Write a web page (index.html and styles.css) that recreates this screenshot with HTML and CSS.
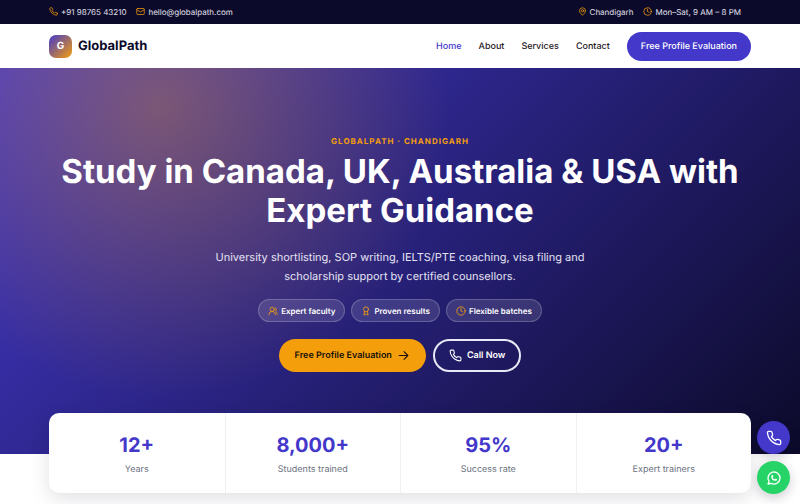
FILE: index.html
```html
<!DOCTYPE html>
<html lang="en">

<head>
    <meta charset="UTF-8" />
    <meta name="viewport" content="width=device-width, initial-scale=1.0" />
    <title>GlobalPath</title>
    <link rel="stylesheet" href="styles.css">
</head>

<body>
    <!-- icon set, shared by the whole page -->
    <svg class="sprite" aria-hidden="true">
        <symbol id="phone" viewBox="0 0 24 24">
            <path d="M22 16.92v3a2 2 0 0 1-2.18 2 19.79 19.79 0 0 1-8.63-3.07 19.5 19.5 0 0 1-6-6 19.79 19.79 0 0 1-3.07-8.67A2 2 0 0 1 4.11 2h3a2 2 0 0 1 2 1.72 12.84 12.84 0 0 0 .7 2.81 2 2 0 0 1-.45 2.11L8.09 9.91a16 16 0 0 0 6 6l1.27-1.27a2 2 0 0 1 2.11-.45 12.84 12.84 0 0 0 2.81.7A2 2 0 0 1 22 16.92z" />
        </symbol>
        <symbol id="mail" viewBox="0 0 24 24">
            <rect x="2" y="4" width="20" height="16" rx="2" />
            <path d="m22 7-8.97 5.7a1.94 1.94 0 0 1-2.06 0L2 7" />
        </symbol>
        <symbol id="pin" viewBox="0 0 24 24">
            <path d="M20 10c0 6-8 12-8 12s-8-6-8-12a8 8 0 0 1 16 0Z" />
            <circle cx="12" cy="10" r="3" />
        </symbol>
        <symbol id="clock" viewBox="0 0 24 24">
            <circle cx="12" cy="12" r="10" />
            <path d="M12 6v6l4 2" />
        </symbol>
        <symbol id="users" viewBox="0 0 24 24">
            <path d="M18 21a8 8 0 0 0-16 0" />
            <circle cx="10" cy="8" r="5" />
            <path d="M22 20c0-3.37-2-6.5-4-8a5 5 0 0 0-.45-8.3" />
        </symbol>
        <symbol id="award" viewBox="0 0 24 24">
            <circle cx="12" cy="8" r="6" />
            <path d="M8.5 13 7 22l5-3 5 3-1.5-9" />
        </symbol>
        <symbol id="arrow" viewBox="0 0 24 24">
            <path d="M4 12h16M13 5l7 7-7 7" />
        </symbol>
        <symbol id="whatsapp" viewBox="0 0 24 24">
            <path d="M3 21l1.65-3.8a9 9 0 1 1 3.4 2.9L3 21" />
            <path d="M9 10a.5.5 0 0 0 1 0V9a.5.5 0 0 0-1 0v1a5 5 0 0 0 5 5h1a.5.5 0 0 0 0-1h-1a.5.5 0 0 0 0 1" />
        </symbol>
    </svg>

    <div class="topbar">
        <div class="container topbar-inner">
            <div class="topbar-group">
                <a href="tel:+919876543210"><svg class="icon"><use href="#phone" /></svg>+91 98765 43210</a>
                <a href="mailto:hello@globalpath.com"><svg class="icon"><use href="#mail" /></svg>hello@globalpath.com</a>
            </div>
            <div class="topbar-group">
                <span><svg class="icon"><use href="#pin" /></svg>Chandigarh</span>
                <span><svg class="icon"><use href="#clock" /></svg>Mon–Sat, 9 AM – 8 PM</span>
            </div>
        </div>
    </div>

    <header class="header">
        <div class="container header-inner">
            <a class="brand" href="#"><span class="logo">G</span>GlobalPath</a>
            <nav class="nav">
                <a class="active" href="#">Home</a>
                <a href="#about">About</a>
                <a href="#services">Services</a>
                <a href="#contact">Contact</a>
                <a class="nav-cta" href="#evaluation">Free Profile Evaluation</a>
            </nav>
        </div>
    </header>

    <main>
        <section class="hero">
            <div class="container">
                <p class="eyebrow">GlobalPath · Chandigarh</p>
                <h1>Study in Canada, UK, Australia &amp; USA with Expert Guidance</h1>
                <p class="lead">University shortlisting, SOP writing, IELTS/PTE coaching, visa filing and scholarship support by certified counsellors.</p>
                <ul class="chips">
                    <li><svg class="icon"><use href="#users" /></svg>Expert faculty</li>
                    <li><svg class="icon"><use href="#award" /></svg>Proven results</li>
                    <li><svg class="icon"><use href="#clock" /></svg>Flexible batches</li>
                </ul>
                <div class="actions">
                    <a class="btn btn-accent" href="#evaluation">Free Profile Evaluation<svg class="icon"><use href="#arrow" /></svg></a>
                    <a class="btn btn-outline" href="tel:+919876543210"><svg class="icon"><use href="#phone" /></svg>Call Now</a>
                </div>
            </div>
        </section>

        <section class="container">
            <div class="stats">
                <div class="stat"><strong>12+</strong><span>Years</span></div>
                <div class="stat"><strong>8,000+</strong><span>Students trained</span></div>
                <div class="stat"><strong>95%</strong><span>Success rate</span></div>
                <div class="stat"><strong>20+</strong><span>Expert trainers</span></div>
            </div>
        </section>
    </main>

    <div class="floating">
        <a class="float-call" href="tel:+919876543210" aria-label="Call"><svg class="icon"><use href="#phone" /></svg></a>
        <a class="float-chat" href="#chat" aria-label="WhatsApp"><svg class="icon"><use href="#whatsapp" /></svg></a>
    </div>
</body>

</html>
```
FILE: styles.css
```css
:root {
    --primary: #4338ca;
    --accent: #f59e0b;
    --dark: #0c0a2a;
}

* {
    box-sizing: border-box;
}

body {
    margin: 0;
    font-family: Inter, "Liberation Sans", sans-serif;
    font-size: 9px;
    color: #1f2024;
    background-color: #fff;
    text-rendering: geometricPrecision;
}

a {
    color: inherit;
    text-decoration: none;
}

.sprite {
    position: absolute;
    width: 0;
    height: 0;
}

.icon {
    width: 10px;
    height: 10px;
    flex-shrink: 0;
    fill: none;
    stroke: currentColor;
    stroke-width: 2;
    stroke-linecap: round;
    stroke-linejoin: round;
}

.container {
    max-width: 1200px;
    margin: 0 auto;
    padding: 0 49px;
}

/* top bar */
.topbar {
    padding-bottom: 1px;
    background-color: var(--dark);
    color: #e2e1ee;
    font-size: 8px;
}

.topbar-inner,
.topbar-group,
.topbar-group a,
.topbar-group span {
    display: flex;
    align-items: center;
}

.topbar-inner {
    justify-content: space-between;
    height: 23px;
}

.topbar-group a,
.topbar-group span {
    gap: 3px;
    margin-right: 10px;
}

.topbar .icon {
    width: 9px;
    height: 9px;
    color: var(--accent);
}

/* header */
.header {
    background-color: #fff;
}

.header-inner {
    display: flex;
    align-items: center;
    justify-content: space-between;
    height: 44px;
}

.brand {
    display: flex;
    align-items: center;
    gap: 6px;
    font-size: 13px;
    font-weight: 700;
    color: var(--dark);
}

.logo {
    display: grid;
    place-items: center;
    width: 23px;
    height: 23px;
    border-radius: 7px;
    background: linear-gradient(135deg, var(--primary), var(--accent));
    color: #fff;
    font-size: 10px;
}

.nav {
    display: flex;
    align-items: center;
    gap: 17px;
    font-weight: 500;
}

.nav .active {
    color: var(--primary);
}

.nav-cta {
    padding: 0 14px;
    border-radius: 15px;
    background-color: var(--primary);
    color: #fff;
    line-height: 29px;
}

/* hero */
.hero {
    padding: 68px 0 82px;
    text-align: center;
    color: #fff;
    background:
        radial-gradient(circle at 20% 10%, rgba(245, 158, 11, 0.35), transparent 40%),
        linear-gradient(135deg, var(--primary), var(--dark));
}

.eyebrow {
    margin: 0 0 6px;
    font-size: 8px;
    font-weight: 700;
    line-height: 10px;
    letter-spacing: 1px;
    text-transform: uppercase;
    color: var(--accent);
}

h1 {
    margin: 0 0 18px;
    font-size: 33px;
    font-weight: 700;
    line-height: 39px;
}

.lead {
    max-width: 400px;
    margin: 0 auto 13px;
    font-size: 11px;
    line-height: 19px;
    color: #e4e2f2;
}

.chips {
    display: flex;
    justify-content: center;
    gap: 6px;
    margin: 0 0 17px;
    padding: 0;
    list-style: none;
}

.chips li {
    display: flex;
    align-items: center;
    gap: 3px;
    height: 23px;
    padding: 0 9px;
    border: 1px solid rgba(255, 255, 255, 0.2);
    border-radius: 12px;
    background-color: rgba(255, 255, 255, 0.12);
    font-size: 8px;
    font-weight: 600;
}

.chips .icon {
    color: var(--accent);
}

.actions {
    display: flex;
    justify-content: center;
    gap: 7px;
}

.btn {
    display: flex;
    align-items: center;
    gap: 5px;
    height: 33px;
    padding: 0 16px;
    border-radius: 17px;
    font-weight: 600;
}

.btn .icon {
    width: 13px;
    height: 13px;
}

.btn-accent {
    background-color: var(--accent);
    color: #16120a;
}

.btn-outline {
    padding: 0 14px;
    border: 2px solid #e9e8f6;
}

/* stats card */
.stats {
    display: grid;
    grid-template-columns: repeat(4, 1fr);
    margin: -41px 0 11px;
    border-radius: 10px;
    background-color: #fff;
    box-shadow: 0 6px 20px rgba(12, 10, 42, 0.12);
}

.stat {
    padding: 19px 10px 16px;
    text-align: center;
}

.stat + .stat {
    border-left: 1px solid #f0f0f3;
}

.stat strong,
.stat span {
    display: block;
}

.stat strong {
    margin-bottom: 5px;
    font-size: 20px;
    line-height: 26px;
    color: var(--primary);
}

.stat span {
    line-height: 14px;
    color: #6b7280;
}

/* floating buttons */
.floating {
    position: fixed;
    right: 10px;
    bottom: 10px;
    display: grid;
    gap: 7px;
}

.floating a {
    display: grid;
    place-items: center;
    width: 33px;
    height: 33px;
    border-radius: 50%;
    color: #fff;
    box-shadow: 0 4px 12px rgba(12, 10, 42, 0.2);
}

.floating .icon {
    width: 16px;
    height: 16px;
}

.float-call {
    background-color: var(--primary);
}

.float-chat {
    background-color: #25d366;
}
```
